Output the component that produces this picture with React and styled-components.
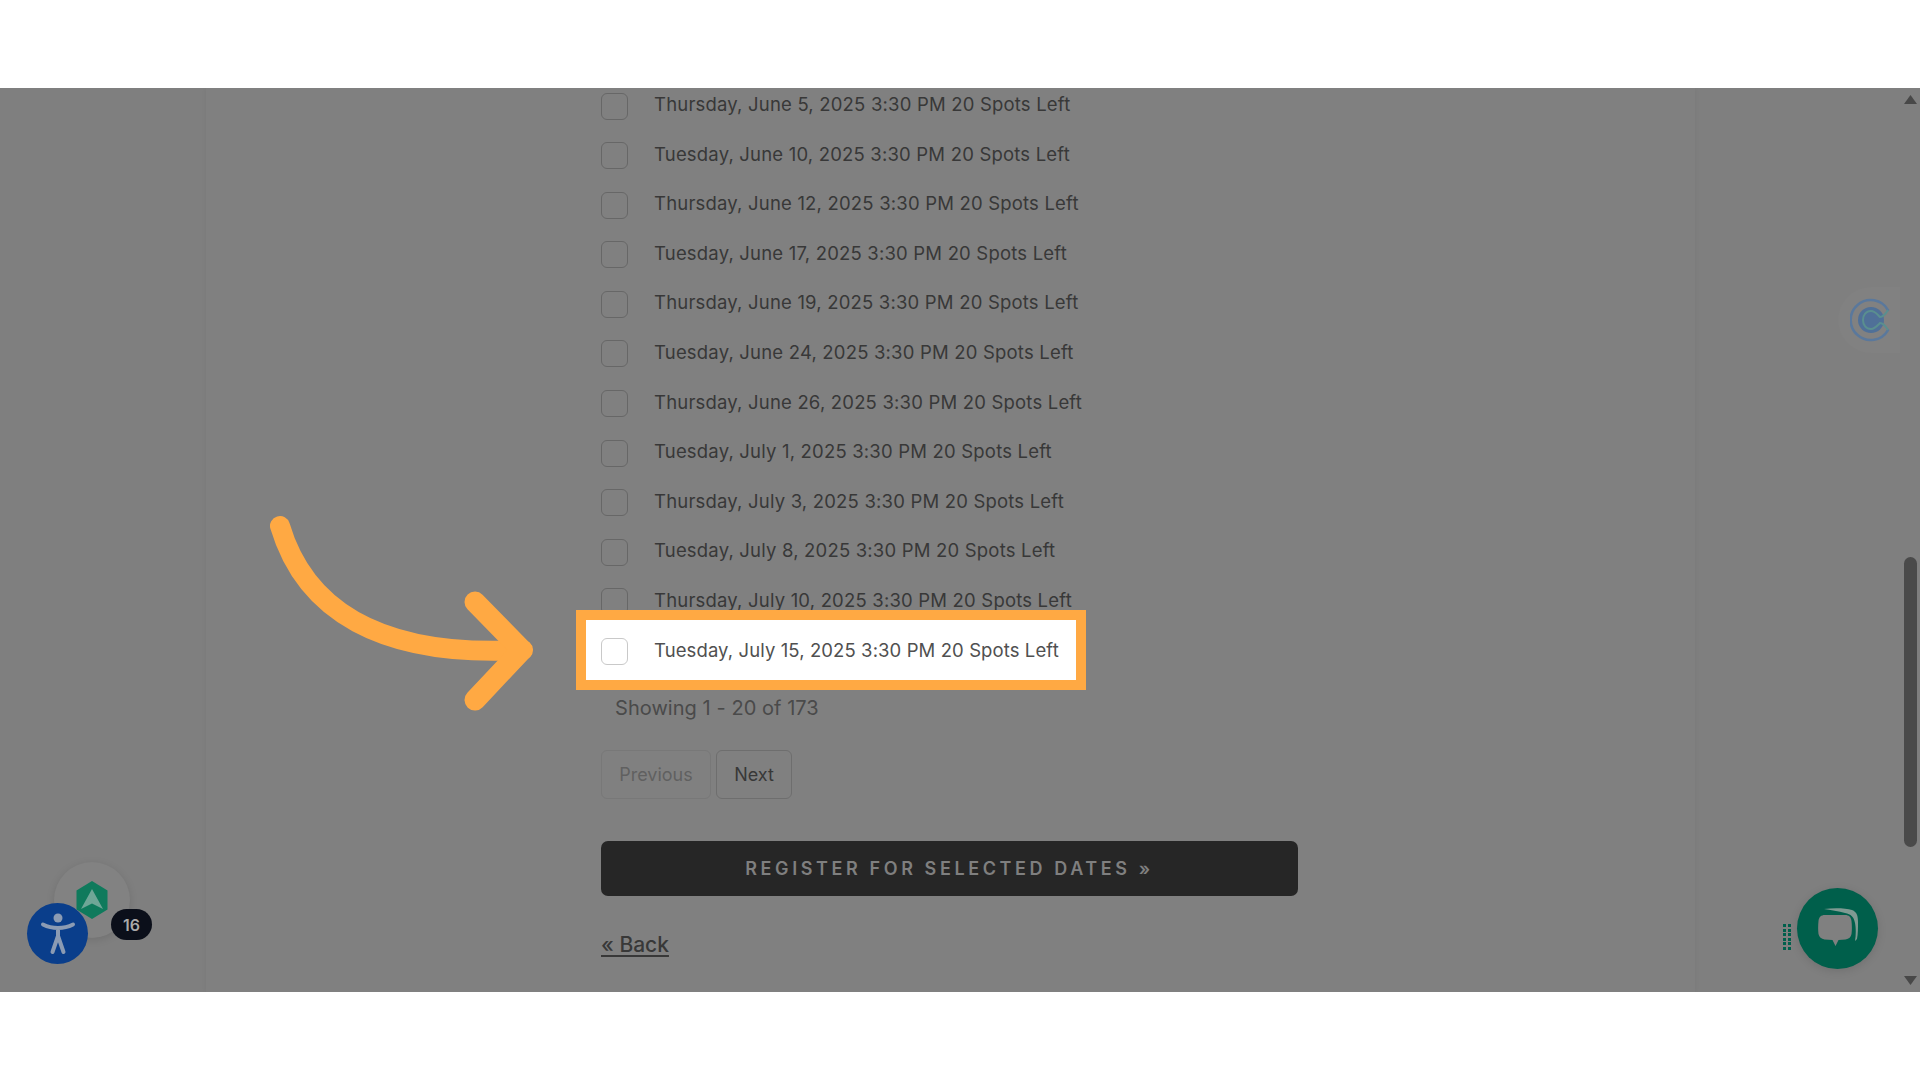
import React from "react";
import styled, { createGlobalStyle } from "styled-components";

const Global = createGlobalStyle`
  html, body { margin: 0; padding: 0; background: #fff; }
  body { font-family: Inter, "Open Sans", "Liberation Sans", sans-serif; }
  #root { width: 1920px; height: 1080px; overflow: hidden; }
`;
const Page = styled.div`
  width: 1920px; height: 1080px; display: flex; flex-direction: column; background: #fff;
`;
const Band = styled.div`
  height: 88px; flex: none; background: #fff;
`;
const Stage = styled.main`
  position: relative; flex: none; height: 904px; background: #7f7f7f; display: flex; overflow: hidden;
`;
const Panel = styled.section`
  width: 1489px; margin-left: 206px; padding-left: 395px; box-sizing: border-box;
  background: #808080; box-shadow: 0 0 5px rgba(0,0,0,.05);
`;
const Column = styled.div`
  width: 697px; margin-top: -6.8px; display: flex; flex-direction: column; align-items: flex-start;
`;
const Row = styled.label`
  position: relative; height: 49.6px; width: 100%; display: flex; align-items: center; gap: 26px;
  ${p => p.$active && `
    z-index: 1;
    &::before {
      content: ""; position: absolute; left: -25px; top: -16.8px; width: 510px; height: 80px;
      box-sizing: border-box; background: #fff; border: 10px solid #ffa943;
    }
  `}
`;
const Box = styled.span`
  position: relative; flex: none; width: 27px; height: 27px; box-sizing: border-box; border-radius: 6px;
  border: 1.5px solid ${p => (p.$active ? "#c9c9c9" : "#676767")};
  background: ${p => (p.$active ? "#fff" : "transparent")};
`;
const RowText = styled.span`
  position: relative; top: -2px; font-size: 18.5px; font-weight: 400; white-space: nowrap;
  letter-spacing: ${p => (p.$active ? ".1px" : ".19px")};
  color: ${p => (p.$active ? "#505050" : "#383838")};
`;
const Count = styled.div`
  margin: 12.5px 0 0 14px; height: 38px; line-height: 38px; font-size: 20px; color: #4a4a4a; letter-spacing: .05px;
`;
const Pager = styled.div`
  display: flex; gap: 5px; margin-top: 23px;
`;
const PageBtn = styled.button`
  height: 49px; width: ${p => p.$w}px; padding: 0; border: 1px solid ${p => (p.$off ? "#787878" : "#6e6e6e")}; border-radius: 6px;
  background: transparent; font: 400 18px Inter, sans-serif; color: ${p => (p.$off ? "#606060" : "#383838")};
`;
const Register = styled.button`
  width: 697px; height: 55px; margin-top: 42px; border: 0; border-radius: 7px; background: #262626;
  color: #7f7f7f; font: 600 18px Inter, sans-serif; letter-spacing: 3.6px;
`;
const Back = styled.a`
  margin-top: 35.5px; font-size: 21px; line-height: 28px; font-weight: 500; color: #383838; text-decoration: underline; text-underline-offset: 3px;
`;
const Scrollbar = styled.div`
  margin-left: auto; margin-right: 3px; width: 13px; display: flex; flex-direction: column; align-items: center;
`;
const Arrow = styled.svg`
  flex: none; width: 13px; height: 9px; margin-top: ${p => p.$top}px; fill: #484848;
`;
const Thumb = styled.div`
  flex: none; width: 13px; height: 290px; margin-top: 453px; border-radius: 7px; background: #4a4a4a;
`;
const ArrowArt = styled.svg`
  position: absolute; left: 0; top: 0; width: 600px; height: 700px; pointer-events: none; z-index: 2;
`;
const Halo = styled.div`
  position: absolute; left: 54px; top: 774px; width: 76px; height: 76px; border-radius: 50%;
  background: #828282; box-shadow: 0 2px 8px rgba(0,0,0,.12); display: flex; align-items: center; justify-content: center;
`;
const Access = styled.div`
  position: absolute; left: 27px; top: 815px; width: 61px; height: 61px; border-radius: 50%;
  background: #0a3e8b; display: flex; align-items: center; justify-content: center;
`;
const Badge = styled.div`
  position: absolute; left: 111px; top: 821px; width: 41px; height: 31px; border-radius: 16px;
  background: #0b0f1a; color: #aaa; font: 600 16px Inter, sans-serif; display: flex; align-items: center; justify-content: center;
`;
const Chat = styled.div`
  position: absolute; left: 1797px; top: 800px; width: 81px; height: 81px; border-radius: 50%;
  background: #005f4b; box-shadow: 0 2px 10px rgba(0,0,0,.12); display: flex; align-items: center; justify-content: center;
`;
const Grip = styled.div`
  position: absolute; left: 1783px; top: 836px; display: grid; grid-template-columns: repeat(2, 3px); grid-auto-rows: 3px; gap: 1.5px;
`;
const GripDot = styled.i`
  display: block; background: #00604c;
`;
const Cal = styled.div`
  position: absolute; left: 1838px; top: 199px; width: 62px; height: 66px; border-radius: 33px 0 0 33px; background: #818181;
  display: flex; align-items: center; padding-left: 12px; box-sizing: border-box;
`;

const dates = [
  "Thursday, June 5, 2025", "Tuesday, June 10, 2025", "Thursday, June 12, 2025", "Tuesday, June 17, 2025",
  "Thursday, June 19, 2025", "Tuesday, June 24, 2025", "Thursday, June 26, 2025", "Tuesday, July 1, 2025",
  "Thursday, July 3, 2025", "Tuesday, July 8, 2025", "Thursday, July 10, 2025", "Tuesday, July 15, 2025",
];

export default function App() {
  return (
    <Page>
      <Global />
      <Band />
      <Stage>
        <Panel>
          <Column>
            {dates.map((d, i) => {
              const active = i === dates.length - 1;
              return (
                <Row key={d} $active={active}>
                  <Box $active={active} />
                  <RowText $active={active}>{d} 3:30 PM 20 Spots Left</RowText>
                </Row>
              );
            })}
            <Count>Showing 1 - 20 of 173</Count>
            <Pager>
              <PageBtn $off $w={110}>Previous</PageBtn>
              <PageBtn $w={76}>Next</PageBtn>
            </Pager>
            <Register>REGISTER FOR SELECTED DATES »</Register>
            <Back>« Back</Back>
          </Column>
        </Panel>
        <Scrollbar>
          <Arrow $top={7} viewBox="0 0 13 9"><path d="M6.5 0 13 9H0z" /></Arrow>
          <Thumb />
          <Arrow $top={129} viewBox="0 0 13 9"><path d="M0 0h13L6.5 9z" /></Arrow>
        </Scrollbar>

        <ArrowArt viewBox="0 0 600 700">
          <g fill="none" stroke="#ffa943" strokeWidth="20" strokeLinecap="round" strokeLinejoin="round">
            <path d="M280 438C305 522 380 570 523 562" />
            <path d="M475 514 522 562 475 612" strokeWidth="21" />
          </g>
        </ArrowArt>

        <Halo>
          <svg width="32" height="38" viewBox="0 0 32 38">
            <path d="M16 0 31.5 9.5v19L16 38 .5 28.5v-19z" fill="#0f7a5c" />
            <path d="M16 8 27 28 16 22.500 5 28z" fill="#6fa697" />
          </svg>
        </Halo>
        <Access>
          <svg width="36" height="44" viewBox="0 0 36 44" fill="none">
            <circle cx="18" cy="6" r="4.500" fill="#8b9bb3" />
            <path d="M3 12.500c4 2 10 3.500 15 3.500s11-1.500 15-3.500M18 16v9M18 24l-5.500 16M18 24l5.500 16" stroke="#8b9bb3" strokeWidth="4" strokeLinecap="round" />
          </svg>
        </Access>
        <Badge>16</Badge>

        <Grip>{Array.from({ length: 12 }, (_, i) => <GripDot key={i} />)}</Grip>
        <Chat>
          <svg width="44" height="42" viewBox="0 0 44 42">
            <path d="M8 1C18-.5 30 0 36 2c5 2 6 6 6 12 0 6 0 12-1 17l-2 2c1-6 1-13 0-18-1-6-4-9-10-10C23 3 14 2 8 1z" fill="#7f9a92" />
            <path d="M9 7h20c4 0 6 2 6.500 6 .5 5 .5 9 0 13-.5 3-2.500 5-6 5.500l-7 .5-3 6-3-6-8-.5c-3-.5-5.500-2.500-6-5.500-.5-4-.5-8 0-13C3 9 5 7 9 7z" fill="#808080" />
          </svg>
        </Chat>

        <Cal>
          <svg width="44" height="44" viewBox="0 0 44 44" fill="none">
            <circle cx="21" cy="22" r="13" fill="#4f7098" />
            <path d="M38 12A20 20 0 1 0 38 32" stroke="#5a789c" strokeWidth="2.500" strokeLinecap="round" />
            <path d="M38 12c-3 5-6 7-8 7-3-3-5-6-9-6-5 0-8 4-8 9s3 9 8 9c4 0 6-3 9-6 2 0 5 2 8 7" stroke="#5a8f8f" strokeWidth="2" />
          </svg>
        </Cal>
      </Stage>
      <Band />
    </Page>
  );
}
